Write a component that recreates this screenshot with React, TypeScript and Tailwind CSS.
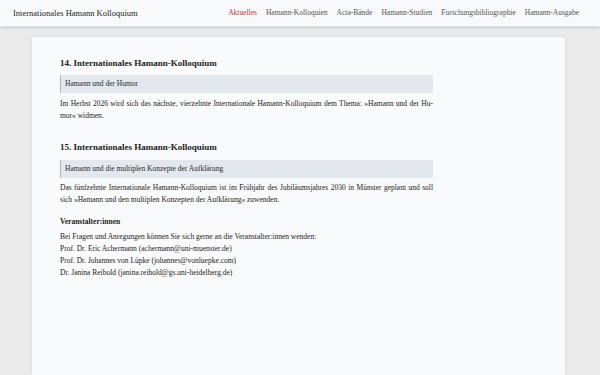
import React from "react";

const navItems = [
  "Aktuelles",
  "Hamann-Kolloquien",
  "Acta-Bände",
  "Hamann-Studien",
  "Forschungsbibliographie",
  "Hamann-Ausgabe",
];

function Topic({ children }: { children: React.ReactNode }) {
  return (
    <div className="flex h-[18px] items-center border-l border-[#aeb3bb] bg-[#e3e7ee] pl-[4px] text-[7.5px] text-[#2a2a2a]">
      {children}
    </div>
  );
}

export default function App() {
  return (
    <div
      className="flex min-h-[375px] flex-col bg-[#ebebeb] text-[#222]"
      style={{ fontFamily: '"Liberation Serif", "DejaVu Serif", serif' }}
    >
      <title>Aktuelles</title>
      <header className="flex h-[27px] items-center justify-between border-b border-[#e0e0e0] bg-[#f8f9fa] pl-[13px] pr-[21px] shadow-sm">
        <div className="text-[8.5px] text-[#1e1e1e]">Internationales Hamann Kolloquium</div>
        <nav className="flex gap-[9px] text-[7.5px] text-[#555]">
          {navItems.map((item, i) => (
            <a key={item} className={i === 0 ? "text-[#b5373a]" : ""} href="#">
              {item}
            </a>
          ))}
        </nav>
      </header>

      <div className="ml-[32px] mt-[10px] w-[533px] flex-1 rounded-t-[2px] bg-[#f9fafc] pl-[28px] pt-[21px] shadow-[0_0_4px_rgba(0,0,0,0.08)]">
        <div className="w-[373px]">
          <h2 className="text-[9px] font-bold leading-[11px]">14. Internationales Hamann-Kolloquium</h2>
          <div className="mt-[6px]">
            <Topic>Hamann und der Humor</Topic>
          </div>
          <p className="mt-[5px] text-justify text-[7.5px] leading-[12px] hyphens-manual">
            Im Herbst 2026 wird sich das nächste, vierzehnte Internationale Hamann-Kolloquium dem Thema: »Hamann und der Hu&shy;mor« widmen.
          </p>

          <h2 className="mt-[20px] text-[9px] font-bold leading-[11px]">15. Internationales Hamann-Kolloquium</h2>
          <div className="mt-[7px]">
            <Topic>Hamann und die multiplen Konzepte der Aufklärung</Topic>
          </div>
          <p className="mt-[4px] text-justify text-[7.5px] leading-[12px]">
            Das fünfzehnte Internationale Hamann-Kolloquium ist im Frühjahr des Jubiläumsjahres 2030 in Münster geplant und soll sich »Hamann und den multiplen Konzepten der Aufklärung« zuwenden.
          </p>

          <h3 className="mt-[10px] text-[7.5px] font-bold leading-[11px]">Veranstalter:innen</h3>
          <div className="mt-[4px] text-[7.5px] leading-[12px]">
            <p>Bei Fragen und Anregungen können Sie sich gerne an die Veranstalter:innen wenden:</p>
            <p>Prof. Dr. Eric Achermann (achermann@uni-muenster.de)</p>
            <p>Prof. Dr. Johannes von Lüpke (johannes@vonluepke.com)</p>
            <p>Dr. Janina Reibold (janina.reibold@gs.uni-heidelberg.de)</p>
          </div>
        </div>
      </div>
    </div>
  );
}
